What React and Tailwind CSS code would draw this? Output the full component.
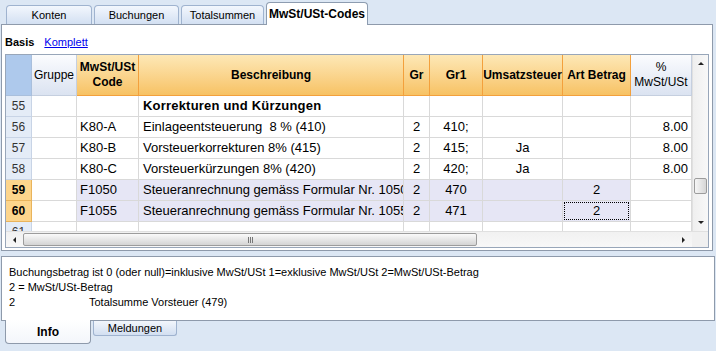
import React from "react";

const F = { fontFamily: '"Liberation Sans", Arial, sans-serif' };

function Tab({ w, children, active }) {
  if (active) {
    return (
      <div
        className={`relative z-10 h-[23px] -mb-px mr-[2px] border border-b-0 border-[#8d9cb0] bg-white rounded-t-[4px] flex items-center justify-center text-[12px] font-bold text-black`}
        style={{ width: w }}
      >
        {children}
      </div>
    );
  }
  return (
    <div
      className="h-[19px] mr-[2px] border border-b-0 border-[#9fb3cf] rounded-t-[4px] bg-gradient-to-b from-[#f3f7fd] to-[#d3e0f2] flex items-center justify-center text-[11px] text-black"
      style={{ width: w }}
    >
      {children}
    </div>
  );
}

const widths = [26, 45, 62, 265, 26, 53, 80, 68, 61];

const rows = [
  { n: "55", code: "", desc: "Korrekturen und Kürzungen", bold: true, gr: "", gr1: "", u: "", art: "", p: "" },
  { n: "56", code: "K80-A", desc: "Einlageentsteuerung  8 % (410)", gr: "2", gr1: "410;", u: "", art: "", p: "8.00" },
  { n: "57", code: "K80-B", desc: "Vorsteuerkorrekturen 8% (415)", gr: "2", gr1: "415;", u: "Ja", art: "", p: "8.00" },
  { n: "58", code: "K80-C", desc: "Vorsteuerkürzungen 8% (420)", gr: "2", gr1: "420;", u: "Ja", art: "", p: "8.00" },
  { n: "59", code: "F1050", desc: "Steueranrechnung gemäss Formular Nr. 1050", gr: "2", gr1: "470", u: "", art: "2", p: "", sel: true },
  { n: "60", code: "F1055", desc: "Steueranrechnung gemäss Formular Nr. 1055", gr: "2", gr1: "471", u: "", art: "2", p: "", sel: true, focus: true },
  { n: "61", code: "", desc: "", gr: "", gr1: "", u: "", art: "", p: "" },
];

function HeaderRow() {
  const blue = "bg-gradient-to-b from-[#fbfcfe] to-[#dbe3f1] border-r border-b border-[#c5cfdf] text-[12px] text-black flex items-center justify-center text-center leading-[15px]";
  const orange = "bg-gradient-to-b from-[#fde8b6] to-[#f7c263] border-r border-b border-[#f3a03c] text-[12px] font-bold text-black flex items-center justify-center text-center leading-[15px]";
  return (
    <div className="flex h-[41px] shrink-0">
      <div className="bg-[#aec9ec] border-r border-b border-[#a9bfdc]" style={{ width: widths[0] }} />
      <div className={blue} style={{ width: widths[1] }}>Gruppe</div>
      <div className={orange} style={{ width: widths[2] }}>MwSt/USt<br />Code</div>
      <div className={orange} style={{ width: widths[3] }}>Beschreibung</div>
      <div className={orange} style={{ width: widths[4] }}>Gr</div>
      <div className={orange} style={{ width: widths[5] }}>Gr1</div>
      <div className={orange} style={{ width: widths[6] }}>Umsatzsteuer</div>
      <div className={orange} style={{ width: widths[7] }}>Art Betrag</div>
      <div className={blue} style={{ width: widths[8] }}>%<br />MwSt/USt</div>
    </div>
  );
}

function BodyRow({ r }) {
  const cell = "h-[21px] shrink-0 border-r border-b border-[#d9d9d9] text-[13px] text-black flex items-center overflow-hidden whitespace-pre";
  const bg = r.sel ? "bg-[#e6e6f5]" : "bg-white";
  return (
    <div className="flex shrink-0">
      <div
        className={`h-[21px] shrink-0 border-r border-b flex items-center justify-center text-[12px] ${
          r.sel ? "bg-[#fdd58c] border-[#e9b45c] font-bold text-black" : "bg-[#e4ecf7] border-[#c8d4e6] text-[#333]"
        }`}
        style={{ width: widths[0] }}
      >
        {r.n}
      </div>
      <div className={`${cell} bg-white`} style={{ width: widths[1] }} />
      <div className={`${cell} ${bg} pl-[3px]`} style={{ width: widths[2] }}>{r.code}</div>
      <div className={`${cell} ${bg} pl-[4px] ${r.bold ? "font-bold tracking-[0.2px]" : ""}`} style={{ width: widths[3] }}>{r.desc}</div>
      <div className={`${cell} ${bg} justify-center`} style={{ width: widths[4] }}>{r.gr}</div>
      <div className={`${cell} ${bg} justify-center`} style={{ width: widths[5] }}>{r.gr1}</div>
      <div className={`${cell} ${bg} justify-center`} style={{ width: widths[6] }}>{r.u}</div>
      <div className={`${cell} ${bg} justify-center p-[1px]`} style={{ width: widths[7] }}>
        {r.focus ? (
          <div className="w-full h-full border border-dotted border-black flex items-center justify-center">{r.art}</div>
        ) : (
          r.art
        )}
      </div>
      <div className={`${cell} bg-white justify-end pr-[3px]`} style={{ width: widths[8] }}>{r.p}</div>
    </div>
  );
}

function VScroll() {
  return (
    <div className="w-[16px] shrink-0 bg-gradient-to-r from-[#efefef] to-[#f8f8f8] border-l border-[#e0e0e0] flex flex-col items-center">
      <div className="h-[17px] flex items-center justify-center">
        <div className="w-0 h-0 border-l-[3px] border-r-[3px] border-b-[3px] border-l-transparent border-r-transparent border-b-[#222]" />
      </div>
      <div className="flex-1 w-full relative">
        <div className="absolute left-[1px] right-[1px] top-[106px] h-[16px] rounded-[2px] border border-[#9c9c9c] bg-gradient-to-r from-[#f6f6f6] to-[#d6d6d6]" />
      </div>
      <div className="h-[17px] flex items-center justify-center">
        <div className="w-0 h-0 border-l-[3px] border-r-[3px] border-t-[3px] border-l-transparent border-r-transparent border-t-[#222]" />
      </div>
    </div>
  );
}

function HScroll() {
  return (
    <div className="h-[16px] shrink-0 flex bg-gradient-to-b from-[#f1f1f1] to-[#f8f8f8] border-t border-[#e0e0e0]">
      <div className="w-[17px] flex items-center justify-center">
        <div className="w-0 h-0 border-t-[3px] border-b-[3px] border-r-[3px] border-t-transparent border-b-transparent border-r-[#222]" />
      </div>
      <div className="flex-1 relative">
        <div className="absolute top-[1px] bottom-[1px] left-0 w-[454px] rounded-[2px] border border-[#9c9c9c] bg-gradient-to-b from-[#fafafa] to-[#d4d4d4] flex items-center justify-center">
          <div className="flex gap-[1px]">
            <div className="w-[1px] h-[6px] bg-[#777]" />
            <div className="w-[1px] h-[6px] bg-[#777]" />
            <div className="w-[1px] h-[6px] bg-[#777]" />
          </div>
        </div>
      </div>
      <div className="w-[18px] flex items-center justify-center">
        <div className="w-0 h-0 border-t-[3px] border-b-[3px] border-l-[3px] border-t-transparent border-b-transparent border-l-[#222]" />
      </div>
      <div className="w-[16px] bg-[#f0f0f0]" />
    </div>
  );
}

export default function App() {
  return (
    <div className="w-[716px] h-[351px] bg-[#dce7f4] overflow-hidden flex flex-col" style={F}>
      {/* top tabs */}
      <div className="h-[24px] shrink-0 flex items-end pl-[6px]">
        <Tab w={86}>Konten</Tab>
        <Tab w={85}>Buchungen</Tab>
        <Tab w={83}>Totalsummen</Tab>
        <Tab w={102} active>MwSt/USt-Codes</Tab>
      </div>

      {/* main panel */}
      <div className="ml-[1px] w-[712px] h-[227px] shrink-0 border border-[#8e9aab] bg-white flex flex-col pl-[3px]">
        <div className="h-[29px] shrink-0 flex items-center gap-[10px] pt-[6px] text-[11px]">
          <span className="font-bold text-black">Basis</span>
          <span className="text-[#0000ee] underline">Komplett</span>
        </div>
        <div className="w-[704px] h-[194px] border border-[#98a6b9] flex flex-col overflow-hidden">
          <div className="flex flex-1 overflow-hidden">
            <div className="flex flex-col w-[686px] overflow-hidden">
              <HeaderRow />
              {rows.map((r) => (
                <BodyRow key={r.n} r={r} />
              ))}
            </div>
            <VScroll />
          </div>
          <HScroll />
        </div>
      </div>

      {/* info panel */}
      <div className="mt-[5px] ml-[1px] w-[714px] h-[65px] shrink-0 border border-[#8e9aab] bg-white pt-[8px] pl-[7px] text-[11px] leading-[15px] text-black">
        <div>Buchungsbetrag ist 0 (oder null)=inklusive MwSt/USt 1=exklusive MwSt/USt 2=MwSt/USt-Betrag</div>
        <div>2 = MwSt/USt-Betrag</div>
        <div className="flex">
          <span className="w-[80px]">2</span>
          <span>Totalsumme Vorsteuer (479)</span>
        </div>
      </div>

      {/* bottom tabs */}
      <div className="flex items-start pl-[5px] shrink-0">
        <div className="relative z-10 -mt-px w-[86px] h-[24px] bg-gradient-to-b from-white to-[#f3f6fb] border border-t-0 border-[#8e9aab] rounded-b-[4px] flex items-center justify-center text-[12px] font-bold text-black">
          Info
        </div>
        <div className="ml-[2px] w-[84px] h-[15px] bg-gradient-to-b from-[#f2f6fc] to-[#d2dff1] border border-t-0 border-[#9fb3cf] rounded-b-[3px] flex items-center justify-center text-[11px] text-black">
          Meldungen
        </div>
      </div>
    </div>
  );
}
